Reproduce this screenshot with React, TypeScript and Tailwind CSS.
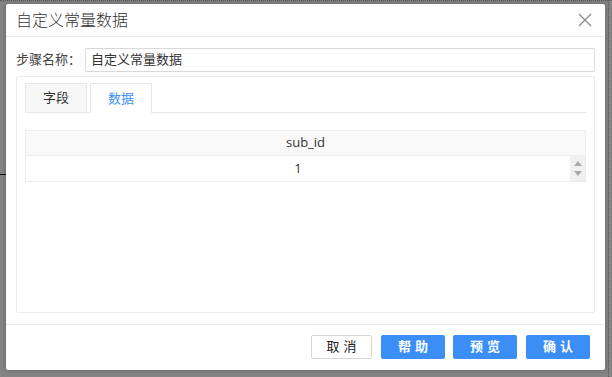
const font = { fontFamily: '"Open Sans", "Noto Sans CJK SC", sans-serif' };

export default function App() {
  return (
    <div
      className="relative w-[612px] h-[377px] bg-[#858585] overflow-hidden text-[#333]"
      style={font}
    >
      {/* bits of the page behind the dialog */}
      <div className="absolute left-0 top-0 w-full h-[1px] border-t border-dotted border-[#5a5a5a]" />
      <div className="absolute left-[608px] top-0 h-full w-[1px] border-l border-dotted border-[#5a5a5a]" />
      <div className="absolute left-0 top-[174px] w-[6px] h-[1px] bg-[#111]" />

      <div className="absolute left-[6px] top-[4px] w-[599px] h-[366px] bg-white rounded-[2px] shadow-[0_0_6px_rgba(0,0,0,0.25)] flex flex-col">
        {/* header */}
        <div className="h-[33px] border-b border-[#e8e8e8] flex items-center justify-between pl-[10px] pr-[13px]">
          <span className="text-[16px] font-light text-[#333]">自定义常量数据</span>
          <svg width="14" height="14" viewBox="0 0 14 14" className="text-[#8c8c8c]">
            <path d="M1 1 L13 13 M13 1 L1 13" stroke="currentColor" strokeWidth="1.3" fill="none" />
          </svg>
        </div>

        {/* body */}
        <div className="flex-1 px-[10px] pt-[11px]">
          <div className="flex items-center h-[24px]">
            <span className="w-[69px] text-[13px] text-[#444]">步骤名称：</span>
            <div className="flex-1 h-[24px] border border-[#d9d9d9] rounded-[2px] flex items-center px-[5px] text-[13px] text-[#333]">
              自定义常量数据
            </div>
          </div>

          <div className="mt-[4px] h-[237px] border border-[#ececec] rounded-[2px] px-[8px] pt-[7px]">
            <div className="flex items-end h-[29px] border-b border-[#e8e8e8]">
              <div className="w-[62px] h-[29px] bg-[#f7f7f7] border border-[#e8e8e8] border-b-0 flex items-center justify-center text-[13px] text-[#333]">
                字段
              </div>
              <div className="ml-[3px] w-[62px] h-[30px] -mb-[1px] bg-white border border-[#e8e8e8] border-b-0 flex items-center justify-center text-[13px] text-[#3a8ef6]">
                数据
              </div>
            </div>

            <div className="mt-[17px] border border-[#ededed]">
              <div className="h-[25px] bg-[#f9f9f9] border-b border-[#ededed] flex items-center justify-center text-[13px] text-[#333]">
                sub_id
              </div>
              <div className="h-[25px] flex">
                <div className="flex-1 flex items-center justify-center text-[13px] text-[#333]">
                  1
                </div>
                <div className="w-[15px] bg-[#f0f0f0] flex flex-col items-center justify-center gap-[5px]">
                  <div className="w-0 h-0 border-l-[4px] border-r-[4px] border-b-[5px] border-l-transparent border-r-transparent border-b-[#a8a8a8]" />
                  <div className="w-0 h-0 border-l-[4px] border-r-[4px] border-t-[5px] border-l-transparent border-r-transparent border-t-[#a8a8a8]" />
                </div>
              </div>
            </div>
          </div>
        </div>

        {/* footer */}
        <div className="h-[46px] border-t border-[#e8e8e8] flex items-start justify-end pt-[10px] pr-[15px]">
          <button className="w-[61px] h-[24px] border border-[#d6d6d6] rounded-[2px] bg-white text-[13px] text-[#222] tracking-[4px] pl-[4px]">
            取消
          </button>
          <button className="ml-[9px] w-[64px] h-[24px] rounded-[2px] bg-[#3a8ef6] text-[13px] font-semibold text-white tracking-[4px] pl-[4px]">
            帮助
          </button>
          <button className="ml-[8px] w-[64px] h-[24px] rounded-[2px] bg-[#3a8ef6] text-[13px] font-semibold text-white tracking-[4px] pl-[4px]">
            预览
          </button>
          <button className="ml-[9px] w-[64px] h-[24px] rounded-[2px] bg-[#3a8ef6] text-[13px] font-semibold text-white tracking-[4px] pl-[4px]">
            确认
          </button>
        </div>
      </div>
    </div>
  );
}
